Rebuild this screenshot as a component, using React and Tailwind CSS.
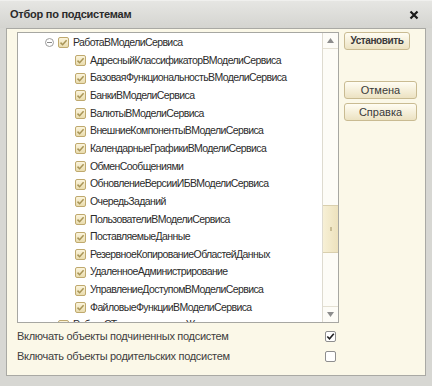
import React from 'react';

const children = [
  'АдресныйКлассификаторВМоделиСервиса',
  'БазоваяФункциональностьВМоделиСервиса',
  'БанкиВМоделиСервиса',
  'ВалютыВМоделиСервиса',
  'ВнешниеКомпонентыВМоделиСервиса',
  'КалендарныеГрафикиВМоделиСервиса',
  'ОбменСообщениями',
  'ОбновлениеВерсииИБВМоделиСервиса',
  'ОчередьЗаданий',
  'ПользователиВМоделиСервиса',
  'ПоставляемыеДанные',
  'РезервноеКопированиеОбластейДанных',
  'УдаленноеАдминистрирование',
  'УправлениеДоступомВМоделиСервиса',
  'ФайловыеФункцииВМоделиСервиса',
];

const TreeCheck = () => (
  <span className="w-[11px] h-[11px] shrink-0 rounded-[2px] border border-[#bfa96e] bg-gradient-to-b from-[#fbf4dc] to-[#e9dcae] flex items-center justify-center">
    <svg width="9" height="9" viewBox="0 0 9 9">
      <path d="M1.5 4.6 L3.6 6.7 L7.6 2.2" fill="none" stroke="#a89456" strokeWidth="1.5" />
    </svg>
  </span>
);

const Row = ({ children: kids, className = '' }) => (
  <div className={`h-[17.67px] flex items-center gap-[4px] ${className}`}>{kids}</div>
);

const Button = ({ label, bold, w }) => (
  <button
    className={`${w} h-[18px] rounded-[3px] border border-[#c9bb92] bg-gradient-to-b from-[#fffdf3] to-[#ece2c2] text-[#3a3a3a] leading-none ${bold ? 'font-bold text-[10px] tracking-[-0.4px]' : 'text-[11px]'}`}
  >
    {label}
  </button>
);

const Box = ({ checked }) => (
  <span className="w-[11px] h-[11px] rounded-[2px] border border-[#8e8e8e] bg-white flex items-center justify-center">
    {checked && (
      <svg width="9" height="9" viewBox="0 0 9 9">
        <path d="M1.3 4.5 L3.5 6.8 L7.8 1.8" fill="none" stroke="#222" strokeWidth="1.6" />
      </svg>
    )}
  </span>
);

export default function App() {
  return (
    <div
      className="w-[432px] h-[386px] bg-[#d7d7d3] flex flex-col text-[#333]"
      style={{ fontFamily: '"Liberation Sans", Arial, sans-serif' }}
    >
      <div className="h-[28px] shrink-0 flex items-center justify-between pl-[10px] pr-[13px] bg-gradient-to-b from-[#e6e6e3] to-[#d4d4d0] border-t border-[#f0f0ee]">
        <span className="text-[11px] font-bold tracking-[-0.25px] text-[#2a2a2a]">Отбор по подсистемам</span>
        <svg width="10" height="10" viewBox="0 0 10 10">
          <path d="M1.5 1.5 L8.5 8.5 M8.5 1.5 L1.5 8.5" stroke="#1a1a1a" strokeWidth="2.2" />
        </svg>
      </div>

      <div className="mx-[6px] h-[348px] bg-[#fbf8e8] border border-[#a9a9a4] flex flex-col">
        <div className="flex pt-[3px] pl-[10px] gap-[5px]">
          <div className="w-[322px] h-[291px] bg-white border border-[#a7a7a2] flex">
            <div className="flex-1 overflow-hidden pt-[1px] text-[10.5px] tracking-[-0.6px] text-[#2c2c2c] whitespace-nowrap">
              <Row className="pl-[27px]">
                <span className="w-[9px] h-[9px] rounded-full border border-[#9c9c9c] flex items-center justify-center">
                  <span className="w-[5px] h-[1px] bg-[#8a8a8a]" />
                </span>
                <TreeCheck />
                <span>РаботаВМоделиСервиса</span>
              </Row>
              {children.map((t) => (
                <Row key={t} className="pl-[57px]">
                  <TreeCheck />
                  <span>{t}</span>
                </Row>
              ))}
              <Row className="pl-[40px]">
                <TreeCheck />
                <span>РаботаСТехнологическимЖурналом</span>
              </Row>
            </div>
            <div className="w-[16px] border-l border-[#dedbd0] bg-[#fdfcf7] flex flex-col">
              <div className="h-[16px] border-b border-[#e4e0d2] flex items-center justify-center">
                <svg width="7" height="5" viewBox="0 0 7 5">
                  <path d="M3.5 0 L7 5 L0 5 Z" fill="#8d8d8d" />
                </svg>
              </div>
              <div className="h-[156px]" />
              <div className="h-[48px] border-y border-[#d9cfae] bg-gradient-to-r from-[#f7f0d6] to-[#ede2bd] flex items-center justify-center">
                <span className="w-[2px] h-[4px] bg-[#c9bd96]" />
              </div>
              <div className="flex-1" />
              <div className="h-[16px] border-t border-[#e4e0d2] flex items-center justify-center">
                <svg width="7" height="5" viewBox="0 0 7 5">
                  <path d="M0 0 L7 0 L3.5 5 Z" fill="#8d8d8d" />
                </svg>
              </div>
            </div>
          </div>

          <div className="flex flex-col">
            <Button label="Установить" bold w="w-[66px]" />
            <div className="h-[31px]" />
            <Button label="Отмена" w="w-[73px]" />
            <div className="h-[4px]" />
            <Button label="Справка" w="w-[73px]" />
          </div>
        </div>

        <div className="pl-[10px] pr-[89px] mt-[3px] text-[11px] tracking-[-0.3px] text-[#404040]">
          <div className="h-[20px] flex items-center justify-between">
            <span>Включать объекты подчиненных подсистем</span>
            <Box checked />
          </div>
          <div className="h-[20px] flex items-center justify-between">
            <span>Включать объекты родительских подсистем</span>
            <Box />
          </div>
        </div>
      </div>
    </div>
  );
}
